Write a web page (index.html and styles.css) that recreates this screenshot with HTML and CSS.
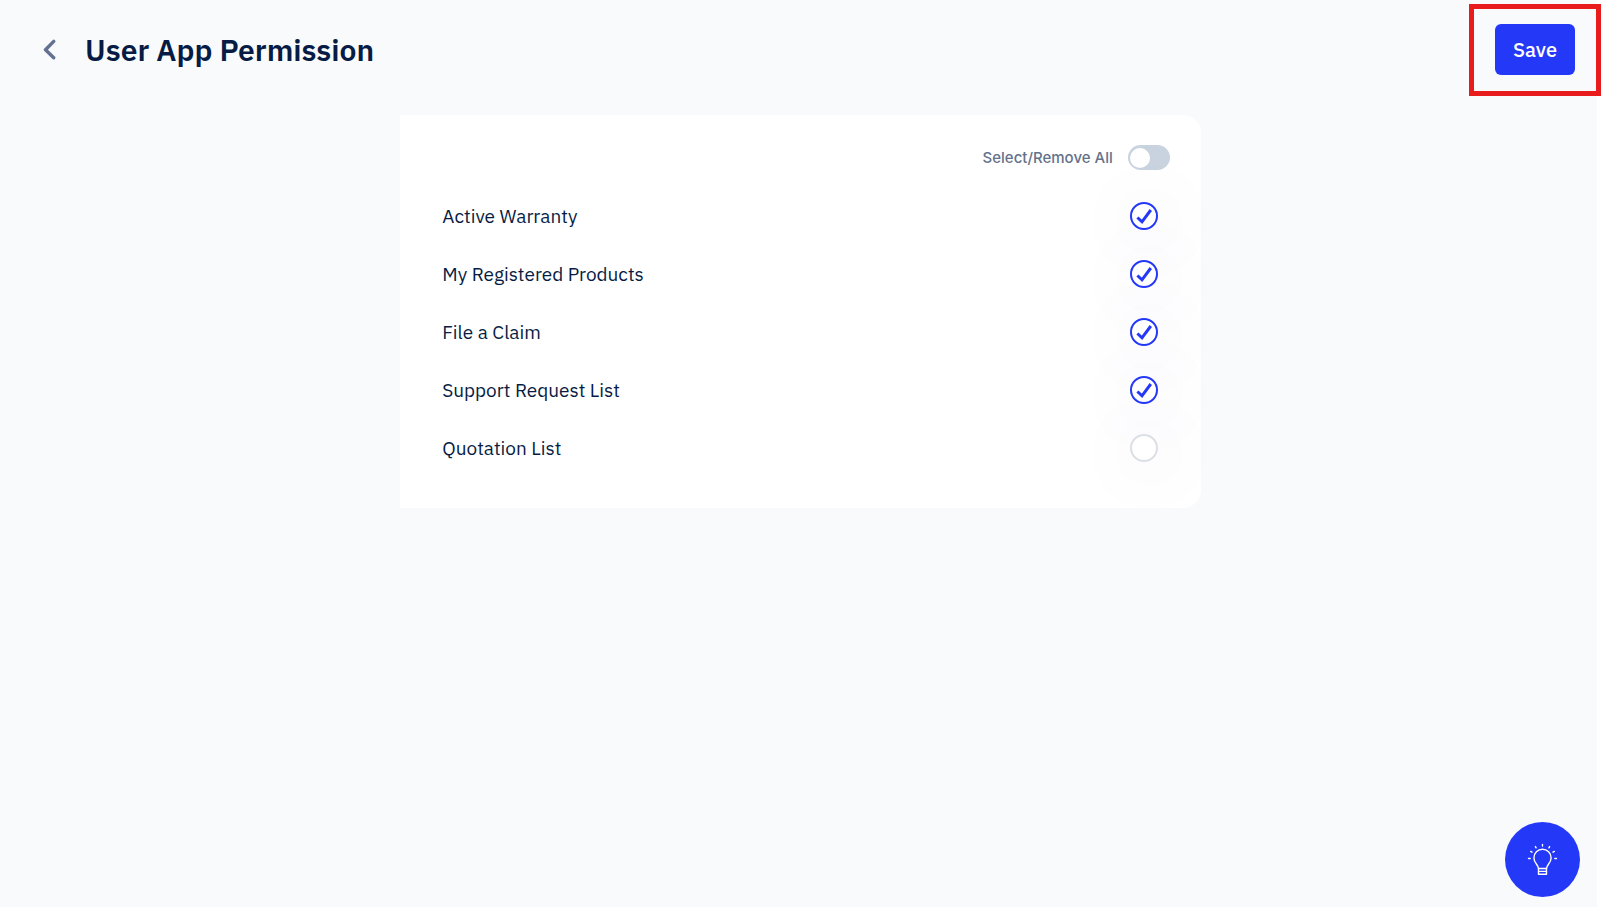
FILE: index.html
```html
<!DOCTYPE html>
<html lang="en">
<head>
<meta charset="utf-8">
<title>User App Permission</title>
<link rel="stylesheet" href="styles.css">
</head>
<body>
<header class="topbar">
  <button class="back" type="button" aria-label="Back">
    <svg width="14" height="22" viewBox="0 0 14 22" fill="none" stroke="currentColor" stroke-width="3.4" stroke-linecap="round" stroke-linejoin="round" aria-hidden="true"><path d="M10.700 2.400 2.500 10.800l8.200 8"/></svg>
  </button>
  <h1 class="title">User App Permission</h1>
  <div class="highlight"><button class="save" type="button">Save</button></div>
</header>
<main class="card">
  <div class="all">
    <label class="all-label" for="all">Select/Remove All</label>
    <input class="switch" id="all" type="checkbox" role="switch">
  </div>
  <ul class="list">
    <li class="row"><label for="p1">Active Warranty</label><span class="tick"><input id="p1" type="checkbox" checked><svg viewBox="0 0 28 28" aria-hidden="true"><path d="M7.4 15.5 12 19.8 20.8 8"/></svg></span></li>
    <li class="row"><label for="p2">My Registered Products</label><span class="tick"><input id="p2" type="checkbox" checked><svg viewBox="0 0 28 28" aria-hidden="true"><path d="M7.4 15.5 12 19.8 20.8 8"/></svg></span></li>
    <li class="row"><label for="p3">File a Claim</label><span class="tick"><input id="p3" type="checkbox" checked><svg viewBox="0 0 28 28" aria-hidden="true"><path d="M7.4 15.5 12 19.8 20.8 8"/></svg></span></li>
    <li class="row"><label for="p4">Support Request List</label><span class="tick"><input id="p4" type="checkbox" checked><svg viewBox="0 0 28 28" aria-hidden="true"><path d="M7.4 15.5 12 19.8 20.8 8"/></svg></span></li>
    <li class="row"><label for="p5">Quotation List</label><span class="tick"><input id="p5" type="checkbox"><svg viewBox="0 0 28 28" aria-hidden="true"><path d="M7.4 15.5 12 19.8 20.8 8"/></svg></span></li>
  </ul>
</main>
<button class="help" type="button" aria-label="Tips">
  <svg width="32" height="34" viewBox="0 0 32 34" fill="none" stroke="currentColor" stroke-width="1.4" stroke-linecap="round" stroke-linejoin="round" aria-hidden="true">
    <path d="M11.500 25.500c0-3.500-4.600-5.500-4.600-10.600a8.600 8.600 0 0 1 17.200 0c0 5.100-4.600 7.100-4.600 10.600"/>
    <path d="M11.500 25.500h8v5.700h-8zM11.500 28.400h8"/>
    <path d="M15.500 1.500v1.600M8.400 3.600l.7 1.200M22.600 3.600l-.7 1.200M3.700 8.400l1.300.8M27.300 8.400l-1.300.8M1.500 15.500h1.700M29.500 15.500h-1.700"/>
  </svg>
</button>
</body>
</html>
```
FILE: styles.css
```css
* { box-sizing: border-box; }

body {
  margin: 0;
  min-height: 100vh;
  background: linear-gradient(to left, #fff 4px, #f9fafc 4px);
  color: #071c44;
  font-family: "IBM Plex Sans", Roboto, sans-serif;
}

button {
  border: 0;
  padding: 0;
  font: inherit;
  cursor: pointer;
}

.topbar {
  display: flex;
  align-items: center;
  padding: 4px 0 0 43px;
}

.back {
  display: flex;
  background: none;
  color: #637290;
}

.title {
  flex: 1;
  margin: 0 0 0 28px;
  font-size: 30px;
  line-height: 40px;
  font-weight: 600;
}

.highlight {
  border: 5px solid #e81c1c;
  padding: 15px 21px 16px;
}

.save {
  display: block;
  padding: 0 18px;
  border-radius: 6px;
  background: #2438f8;
  color: #fff;
  font-size: 20px;
  line-height: 51px;
  font-weight: 500;
}

.card {
  width: 50%;
  margin: 19px auto 0;
  padding: 30px 31px 31px 42px;
  border-radius: 0 18px 18px 0;
  background: #fff;
}

.all {
  display: flex;
  align-items: center;
  justify-content: flex-end;
  gap: 15px;
  margin-bottom: 17px;
}

.all-label {
  color: #63728a;
  font-family: Inter, sans-serif;
  font-size: 15px;
  line-height: 20px;
  font-weight: 500;
}

.switch {
  appearance: none;
  width: 42px;
  height: 25px;
  margin: 0;
  padding: 3px 2px;
  border-radius: 13px;
  background: #c9d3e0;
}

.switch::before {
  content: "";
  display: block;
  width: 20px;
  height: 20px;
  border-radius: 50%;
  background: #fff;
}

.switch:checked { background: #2438f8; }
.switch:checked::before { margin-left: auto; }

.list {
  margin: 0;
  padding: 0 12px 0 0;
  list-style: none;
}

.row {
  display: flex;
  align-items: center;
  justify-content: space-between;
  min-height: 58px;
  font-size: 19px;
  line-height: 24px;
  font-weight: 400;
}

.tick {
  display: grid;
  width: 28px;
  height: 28px;
  border-radius: 50%;
  box-shadow: 5px 5px 60px 30px rgba(36, 56, 160, 0.014);
}

.tick input,
.tick svg { grid-area: 1 / 1; }

.tick input {
  appearance: none;
  width: 28px;
  height: 28px;
  margin: 0;
  border: 2px solid #dcdfe6;
  border-radius: 50%;
  background: #fff;
}

.tick svg {
  z-index: 1;
  fill: none;
  stroke: #2438f8;
  stroke-width: 3;
  pointer-events: none;
  visibility: hidden;
}

.tick input:checked { border-color: #2438f8; }
.tick input:checked + svg { visibility: visible; }

.help {
  position: fixed;
  right: 21px;
  bottom: 10px;
  display: grid;
  place-items: center;
  width: 75px;
  height: 75px;
  border-radius: 50%;
  background: #2438f8;
  color: #fff;
}
```
